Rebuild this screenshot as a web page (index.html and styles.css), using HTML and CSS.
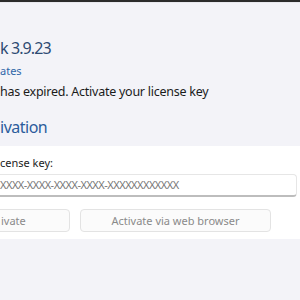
FILE: index.html
```html
<!DOCTYPE html>
<html>
<head>
<meta charset="utf-8">
<link rel="stylesheet" href="styles.css">
</head>
<body>
<div class="topbar"></div>
<div class="header">
  <div class="title">k 3.9.23</div>
  <div class="link">ates</div>
  <div class="message">has expired. Activate your license key</div>
  <div class="section">ivation</div>
</div>
<div class="panel">
  <div class="label">cense key:</div>
  <div class="input">XXXX-XXXX-XXXX-XXXX-XXXXXXXXXXXX</div>
  <div class="buttons">
    <div class="btn btn-first">ivate</div>
    <div class="btn btn-second">Activate via web browser</div>
  </div>
</div>
</body>
</html>
```
FILE: styles.css
```css
html, body {
  margin: 0;
  padding: 0;
}
body {
  width: 300px;
  height: 300px;
  overflow: hidden;
  background: #f3f3f8;
  font-family: "Noto Sans", "Open Sans", sans-serif;
  color: #1b1b1b;
}
.topbar {
  height: 2px;
  background: #2b2b2b;
  border-bottom: 1px solid #e8e8ee;
}
.header {
  padding-top: 34px;
}
.title {
  font-size: 16px;
  line-height: 22px;
  letter-spacing: -0.9px;
  color: #2d4a72;
}
.link {
  margin-top: 5px;
  font-size: 11px;
  line-height: 14px;
  color: #2f66a8;
}
.message {
  margin-top: 5px;
  font-size: 12.5px;
  line-height: 18px;
  letter-spacing: -0.25px;
  color: #1b1b1b;
}
.section {
  margin-top: 15px;
  font-size: 16px;
  line-height: 22px;
  letter-spacing: -0.5px;
  color: #2b5c9c;
}
.panel {
  margin-top: 8px;
  background: #ffffff;
  padding: 9px 3px 7px 0;
}
.label {
  font-size: 11px;
  line-height: 15px;
  color: #1b1b1b;
}
.input {
  margin-top: 4px;
  height: 20px;
  border: 1px solid #e6e6e6;
  border-bottom: 2px solid #bdbdbd;
  border-left: none;
  border-radius: 0 4px 4px 0;
  font-size: 11px;
  line-height: 20px;
  letter-spacing: -0.5px;
  color: #767676;
  white-space: nowrap;
  overflow: hidden;
}
.buttons {
  display: flex;
  gap: 10px;
  margin-top: 12px;
}
.btn {
  box-sizing: border-box;
  height: 23px;
  border: 1px solid #e3e3e3;
  border-radius: 4px;
  background: #fbfbfb;
  color: #8a8a8a;
  font-size: 11px;
  line-height: 21px;
  text-align: center;
}
.btn-first {
  width: 80px;
  margin-left: -10px;
  padding-left: 10px;
  text-align: left;
}
.btn-second {
  width: 191px;
}
```
